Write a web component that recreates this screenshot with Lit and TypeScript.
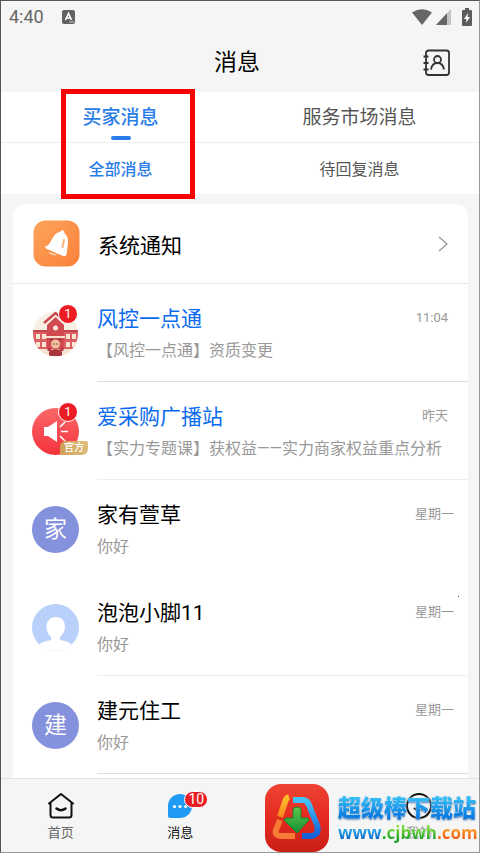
import { LitElement, html, css, nothing, TemplateResult } from "lit";
import { customElement, state } from "lit/decorators.js";
import { classMap } from "lit/directives/class-map.js";

interface Chat {
  name: string;
  preview: string;
  time: string;
  avatar: TemplateResult;
  unread?: number;
  official?: boolean;
  tag?: string;
  line?: "strong" | "soft";
}

const school = html`<svg class="pic" viewBox="0 0 47 47" aria-hidden="true">
  <defs><clipPath id="disc"><circle cx="23.500" cy="24" r="22.500" /></clipPath></defs>
  <g clip-path="url(#disc)">
    <rect width="47" height="47" fill="#f8efe4" />
    <path d="M0 38h47v9H0z" fill="#f5e3d2" />
    <path d="M1 20h45v19H1z" fill="#db5f62" />
    <path d="M1 20h14v2H1zM32 20h14v2H32z" fill="#c1434b" />
    <path d="M15 39V15l8.500-8 8.500 8v24z" fill="#d04a50" />
    <path d="M12 13 23.500 3 35 13" fill="none" stroke="#c9474d" stroke-width="2.400" />
    <path d="M14 26h19v2H14z" fill="#f7e3d0" />
    <circle cx="23.500" cy="18" r="2.500" fill="#fbeadb" />
    <path d="M4 24h4v5H4zM10 24h4v5h-4zM34 24h4v5h-4zM40 24h4v5h-4zM4 32h4v5H4zM10 32h4v5h-4zM34 32h4v5h-4zM40 32h4v5h-4z" fill="#fbe6d4" />
    <circle cx="23.500" cy="34" r="4.500" fill="#f0c09c" />
    <path d="M18 31q5.500-4 11 0v-2H18z" fill="#8e2f35" />
    <path d="M17 46v-4q6.500-6 13 0v4z" fill="#a9343b" />
    <path d="M17 37l3 3-2 2-3-2zM30 37l-3 3 2 2 3-2z" fill="#b93c43" />
    <circle cx="22" cy="34" r=".7" fill="#6b2a2a" /><circle cx="25" cy="34" r=".7" fill="#6b2a2a" />
  </g>
</svg>`;

const speaker = html`<svg class="pic" viewBox="0 0 47 47" aria-hidden="true">
  <defs><linearGradient id="spk" x1="0" y1="0" x2="0" y2="1"><stop offset="0" stop-color="#f8686a" /><stop offset="1" stop-color="#f5323c" /></linearGradient></defs>
  <circle cx="23.500" cy="23.500" r="23.500" fill="url(#spk)" />
  <path d="M12 19h4l9-6v21l-9-6h-4z" fill="#fff" />
  <path d="M28 19l5-5M29 23.500h7M28 28l5 5" stroke="#fff" stroke-width="1.600" fill="none" />
</svg>`;

const person = html`<svg class="pic" viewBox="0 0 47 47" aria-hidden="true">
  <defs><clipPath id="round"><circle cx="23.500" cy="23.500" r="23.500" /></clipPath></defs>
  <g clip-path="url(#round)">
    <rect width="47" height="47" fill="#b9d0fb" />
    <path d="M24 13c5.500 0 9 4 9 9.500 0 5-2.500 8.500-5 10.500v3c6 1 10.500 2.500 13 6v7H6v-7c2.500-3.500 7-5 13-6v-3c-2.500-2-4.500-5.500-4.500-10.500 0-5.500 4-9.500 9.500-9.500z" fill="#fff" />
  </g>
</svg>`;

const letter = (t: string) => html`<span class="letter">${t}</span>`;

const chats: Chat[] = [
  { name: "风控一点通", preview: "【风控一点通】资质变更", time: "11:04", avatar: school, unread: 1, official: true, line: "strong" },
  { name: "爱采购广播站", preview: "【实力专题课】获权益——实力商家权益重点分析", time: "昨天", avatar: speaker, unread: 1, official: true, tag: "官方", line: "soft" },
  { name: "家有萱草", preview: "你好", time: "星期一", avatar: letter("家") },
  { name: "泡泡小脚11", preview: "你好", time: "星期一", avatar: person, line: "soft" },
  { name: "建元住工", preview: "你好", time: "星期一", avatar: letter("建"), line: "strong" },
];

@customElement("status-bar")
class StatusBar extends LitElement {
  static styles = css`
    :host { display: flex; align-items: center; height: 32px; padding: 0 7px 0 8px; color: #666; font: 18px/32px Roboto, sans-serif; }
    .input { width: 13px; height: 14px; margin-left: 18px; }
    .signals { display: flex; align-items: center; margin-left: auto; }
    .wifi { width: 20px; height: 16px; margin-right: 4px; }
    .cell { width: 15px; height: 16px; margin-right: 11px; }
    .battery { width: 10px; height: 18px; }
  `;
  render() {
    return html`<span>4:40</span>
      <svg class="input" viewBox="0 0 13 14"><rect width="13" height="14" rx="2" fill="#616161" /><path d="M3.500 10 6.500 3.500 9.500 10M4.500 8h4" stroke="#fff" stroke-width="1.600" fill="none" /><path d="M7 12h5" stroke="#ccc" /></svg>
      <span class="signals">
        <svg class="wifi" viewBox="0 0 20 16"><path d="M0 3.500Q10-3 20 3.500L10 16z" fill="#666" /></svg>
        <svg class="cell" viewBox="0 0 15 16"><path d="M0 16 15 0v16z" fill="#c4c4c4" /><path d="M0 16 11 4.300V16z" fill="#666" /></svg>
        <svg class="battery" viewBox="0 0 10 18"><path d="M3 0h4v2h2q1 0 1 1v14q0 1-1 1H1q-1 0-1-1V3q0-1 1-1h2z" fill="#5c5c5c" /><path d="M6 5 2 11h2.500L4 15l4-6H5.500z" fill="#fff" /></svg>
      </span>`;
  }
}

@customElement("chat-list")
class ChatList extends LitElement {
  static styles = css`
    :host { display: block; }
    .list { margin: 0; padding: 0; list-style: none; }
    .row { display: grid; grid-template-columns: 47px 1fr; gap: 18px; align-items: center; width: 100%; height: 98px; box-sizing: border-box; margin: 0; padding: 0 0 0 19px; border: 0; background: none; color: inherit; font: inherit; text-align: left; cursor: pointer; }
    .face { position: relative; height: 47px; }
    .pic { display: block; width: 47px; height: 47px; }
    .letter { display: block; width: 47px; height: 47px; border-radius: 50%; background: #8491dc; color: #fff; font-size: 23px; line-height: 47px; text-align: center; }
    .unread { position: absolute; top: -6px; left: 26px; width: 18px; height: 18px; border: 1px solid #fff; border-radius: 50%; background: #ec1c24; color: #fff; font-size: 13px; line-height: 18px; text-align: center; }
    .tag { position: absolute; left: 28px; bottom: 0; width: 28px; height: 14px; border-radius: 6px 2px 6px 0; background: linear-gradient(90deg, #cf9f55, #dfbd7c); color: #fff; font-size: 10px; font-weight: 500; line-height: 14px; text-align: center; }
    .body { display: grid; grid-template-columns: 1fr auto; grid-template-rows: 30px 22px; row-gap: 6px; align-content: start; height: 98px; box-sizing: border-box; padding: 20px 14px 0 0; border-bottom: 1px solid transparent; }
    .official .body { padding-right: 20px; }
    .strong .body { border-color: #dcdcdc; }
    .soft .body { border-color: #eee; }
    .name { color: #000; font-size: 21px; line-height: 30px; }
    .official .name { color: #0a6af0; }
    .time { color: #999; font-size: 13px; line-height: 28px; }
    .preview { grid-column: 1 / 3; color: #999; font-size: 16px; line-height: 22px; white-space: nowrap; }
  `;
  render() {
    return html`<ul class="list">${chats.map((c) => html`<li>
      <button class=${classMap({ row: true, official: !!c.official, strong: c.line === "strong", soft: c.line === "soft" })} type="button">
        <span class="face">${c.avatar}
          ${c.unread ? html`<span class="unread">${c.unread}</span>` : nothing}
          ${c.tag ? html`<span class="tag">${c.tag}</span>` : nothing}
        </span>
        <span class="body"><span class="name">${c.name}</span><span class="time">${c.time}</span><span class="preview">${c.preview}</span></span>
      </button></li>`)}</ul>`;
  }
}

@customElement("site-mark")
class SiteMark extends LitElement {
  static styles = css`
    :host { display: flex; gap: 9px; align-items: center; font-family: "Open Sans", "Noto Sans", "Noto Sans CJK SC", sans-serif; font-weight: 700; }
    .logo { width: 64px; height: 68px; }
    .words { display: block; width: 141px; }
    .cn { display: block; font-family: "Noto Sans CJK SC", sans-serif; font-weight: 900; font-size: 23px; line-height: 30px; white-space: nowrap; background: linear-gradient(#35c0f7 20%, #0a7be0 85%); -webkit-background-clip: text; background-clip: text; color: transparent; filter: drop-shadow(0 0 1px #fff) drop-shadow(0 1px 0 #2264a8); }
    .url { display: block; font-size: 17px; line-height: 24px; white-space: nowrap; filter: drop-shadow(0 0 1px #fff); }
    .blue, .green, .orange { -webkit-background-clip: text; background-clip: text; color: transparent; }
    .blue { background-image: linear-gradient(#2cb0f0 30%, #0a63c8 80%); }
    .green { background-image: linear-gradient(#7ddb3d 30%, #1f9d2c 80%); }
    .orange { background-image: linear-gradient(#ffa22e 30%, #f05a12 80%); }
  `;
  render() {
    return html`<svg class="logo" viewBox="0 0 64 68" aria-hidden="true">
        <defs>
          <linearGradient id="red" x1="0" y1="0" x2="0" y2="1"><stop offset="0" stop-color="#ee4433" /><stop offset=".5" stop-color="#e52a20" /><stop offset="1" stop-color="#c91f17" /></linearGradient>
          <linearGradient id="yl" x1="0" y1="0" x2="0" y2="1"><stop offset="0" stop-color="#ffc02a" /><stop offset="1" stop-color="#f7841d" /></linearGradient>
          <linearGradient id="bl" x1="0" y1="0" x2="0" y2="1"><stop offset="0" stop-color="#45c3f6" /><stop offset="1" stop-color="#1560d8" /></linearGradient>
          <linearGradient id="gr" x1="0" y1="0" x2="0" y2="1"><stop offset="0" stop-color="#5fc64a" /><stop offset="1" stop-color="#149034" /></linearGradient>
        </defs>
        <rect width="64" height="68" rx="16" fill="url(#red)" />
        <g fill="none" stroke-width="6" stroke-linejoin="round">
          <path d="M24 13q-3 1-4 5l-5 15" stroke="url(#yl)" />
          <path d="M15 36 11 46q-2 6 6 6h13" stroke="#f57a35" />
          <path d="M28 16h10q4 0 6 5l8 20q3 11-7 11h-8" stroke="url(#bl)" />
        </g>
        <path d="M28 26q0-3 4-3t4 3v8h6q3 1 1 3L32 49 20 37q-2-2 2-3h6z" fill="url(#gr)" stroke="#158a2c" />
      </svg>
      <span class="words"><span class="cn">超级棒下载站</span><span class="url"><span class="blue">www</span><span class="green">.cjbwh</span><span class="orange">.com</span></span></span>`;
  }
}

@customElement("app-root")
class AppRoot extends LitElement {
  @state() private main = 0;
  @state() private sub = 0;

  static styles = css`
    :host { display: flex; flex-direction: column; position: relative; box-sizing: border-box; min-height: 100vh; border: 1px solid #999; border-top-color: #555; border-left-color: #555; background: #f5f5f5; color: #000; font-family: Roboto, "Noto Sans CJK SC", sans-serif; }
    .top { display: grid; grid-template-columns: 1fr auto 1fr; align-items: center; height: 59px; padding: 0 28px 0 22px; }
    .title { grid-column: 2; margin: 0; font-size: 23px; font-weight: 400; line-height: 32px; }
    .book { justify-self: end; width: 28px; height: 28px; padding: 0; border: 0; background: none; }
    .book svg { display: block; width: 28px; height: 28px; }
    .tabs { position: relative; background: #fff; }
    .bar { display: grid; grid-template-columns: 1fr 1fr; height: 51px; }
    .bar.first { box-sizing: border-box; border-bottom: 1px solid #eee; }
    .tab { display: flex; flex-direction: column; align-items: center; padding: 11px 0 0; border: 0; background: none; color: #555; font: inherit; font-size: 19px; line-height: 30px; cursor: pointer; }
    .second .tab { padding-top: 12px; font-size: 16px; }
    .tab.on { color: #2a7de8; font-weight: 500; }
    .first .tab.on::after { content: ""; width: 20px; height: 4px; margin-top: 3px; border-radius: 2px; background: #2a7de8; }
    .focus { position: absolute; top: -3px; left: calc(25% - 60px); width: 134px; height: 110px; box-sizing: border-box; border: 5px solid #f80000; pointer-events: none; }
    .card { position: relative; flex: 1; margin: 10px 11px 0 12px; border-radius: 12px 12px 0 0; background: #fff; }
    .system { display: flex; align-items: center; gap: 18px; width: 100%; height: 80px; box-sizing: border-box; padding: 0 20px; border: 0; border-bottom: 1px solid #e6e6e6; background: none; color: #000; font: inherit; font-size: 21px; text-align: left; }
    .bell { width: 47px; height: 47px; }
    .go { width: 10px; height: 16px; margin-left: auto; }
    .speck { position: absolute; top: 392px; right: 9px; width: 1px; height: 1px; background: #367; }
    .nav { display: grid; grid-template-columns: repeat(4, 1fr); height: 73px; border-top: 1px solid #e2e2e2; }
    .item { position: relative; display: flex; flex-direction: column; align-items: center; gap: 4px; padding-top: 14px; color: #666; font-size: 13px; line-height: 20px; text-decoration: none; }
    .item.on { color: #111; }
    .item.last { grid-column: 4; color: #888; }
    .item svg { width: 26px; height: 26px; }
    .count { position: absolute; top: 12px; left: calc(50% + 4px); width: 22px; height: 15px; border: 1px solid #fff; border-radius: 9px; background: #ea1d22; color: #fff; font-size: 14px; line-height: 15px; text-align: center; }
    .mark { position: absolute; z-index: 1; right: 0; bottom: 0; pointer-events: none; }
  `;

  private tab(text: string, index: number, group: "main" | "sub") {
    const on = this[group] === index;
    return html`<button class=${classMap({ tab: true, on })} type="button" role="tab" aria-selected=${on} @click=${() => (this[group] = index)}>${text}</button>`;
  }

  render() {
    return html`
      <status-bar></status-bar>
      <header class="top">
        <h1 class="title">消息</h1>
        <button class="book" type="button" aria-label="通讯录">
          <svg viewBox="0 0 28 28" fill="none" stroke="#333" stroke-width="1.800"><rect x="3" y="1.500" width="23" height="24.500" rx="2.500" /><path d="M.5 7.500h5M.5 14h5M.5 20.500h5" /><circle cx="14.500" cy="10.500" r="3.500" /><path d="M8 20.500Q9 14 14.500 14T21 20.500" /></svg>
        </button>
      </header>
      <section class="tabs">
        <div class="bar first" role="tablist">${this.tab("买家消息", 0, "main")}${this.tab("服务市场消息", 1, "main")}</div>
        <div class="bar second" role="tablist">${this.tab("全部消息", 0, "sub")}${this.tab("待回复消息", 1, "sub")}</div>
        <div class="focus"></div>
      </section>
      <main class="card">
        <button class="system" type="button">
          <svg class="bell" viewBox="0 0 47 47" aria-hidden="true">
            <defs><linearGradient id="or" x1="0" y1="0" x2="1" y2="1"><stop offset="0" stop-color="#fda45b" /><stop offset="1" stop-color="#fb8039" /></linearGradient></defs>
            <rect x=".5" y=".5" width="46" height="46" rx="12" fill="url(#or)" />
            <path d="M27 12q1-2.500 3-1.500t1.500 3q4 3 3.500 9l-1 9q0 2-1 4-1 1-3 .5L14 29q-2-1-2-2.500 3-.5 4.500-3l3.500-6q2.500-5 7-5.500z" fill="#fff" />
            <path d="M15 32q4 4 10 3z" fill="#ffe0c4" />
            <path d="M31 20l-1.500 7" stroke="#fdb47e" fill="none" stroke-width="2" stroke-linecap="round" />
          </svg>
          <span>系统通知</span>
          <svg class="go" viewBox="0 0 10 16" aria-hidden="true"><path d="M1 1l8 7-8 7" fill="none" stroke="#999" stroke-width="1.300" /></svg>
        </button>
        <chat-list></chat-list>
        <span class="speck"></span>
      </main>
      <nav class="nav">
        <a class="item" href="#home">
          <svg viewBox="0 0 26 26" fill="none" stroke="#111" stroke-width="2" stroke-linejoin="round" stroke-linecap="round" aria-hidden="true"><path d="M1 10.500 13 1l12 9.500M2.500 9.500V22q0 2.500 2.500 2.500h16q2.500 0 2.500-2.500V9.500" /><path d="M8.500 15.500q4.500 3.500 9 0" stroke-width="2.500" /></svg>
          <span>首页</span>
        </a>
        <a class="item on" href="#messages">
          <svg viewBox="0 0 26 26" aria-hidden="true"><path d="M13 1a12 12 0 1 1 0 24H3q-2 0-2-2V13A12 12 0 0 1 13 1z" fill="#1f9bf5" /><g fill="#fff"><circle cx="7.500" cy="13.500" r="1.600" /><circle cx="13" cy="13.500" r="1.600" /><circle cx="18.500" cy="13.500" r="1.600" /></g></svg>
          <span class="count">10</span><span>消息</span>
        </a>
        <a class="item last" href="#me">
          <svg viewBox="0 0 26 26" fill="none" stroke="#111" stroke-width="2" stroke-linecap="round" aria-hidden="true"><circle cx="13" cy="13" r="12" /><path d="M8.500 15.500q4.500 3.500 9 0" /></svg>
          <span>我的</span>
        </a>
      </nav>
      <site-mark class="mark"></site-mark>`;
  }
}
